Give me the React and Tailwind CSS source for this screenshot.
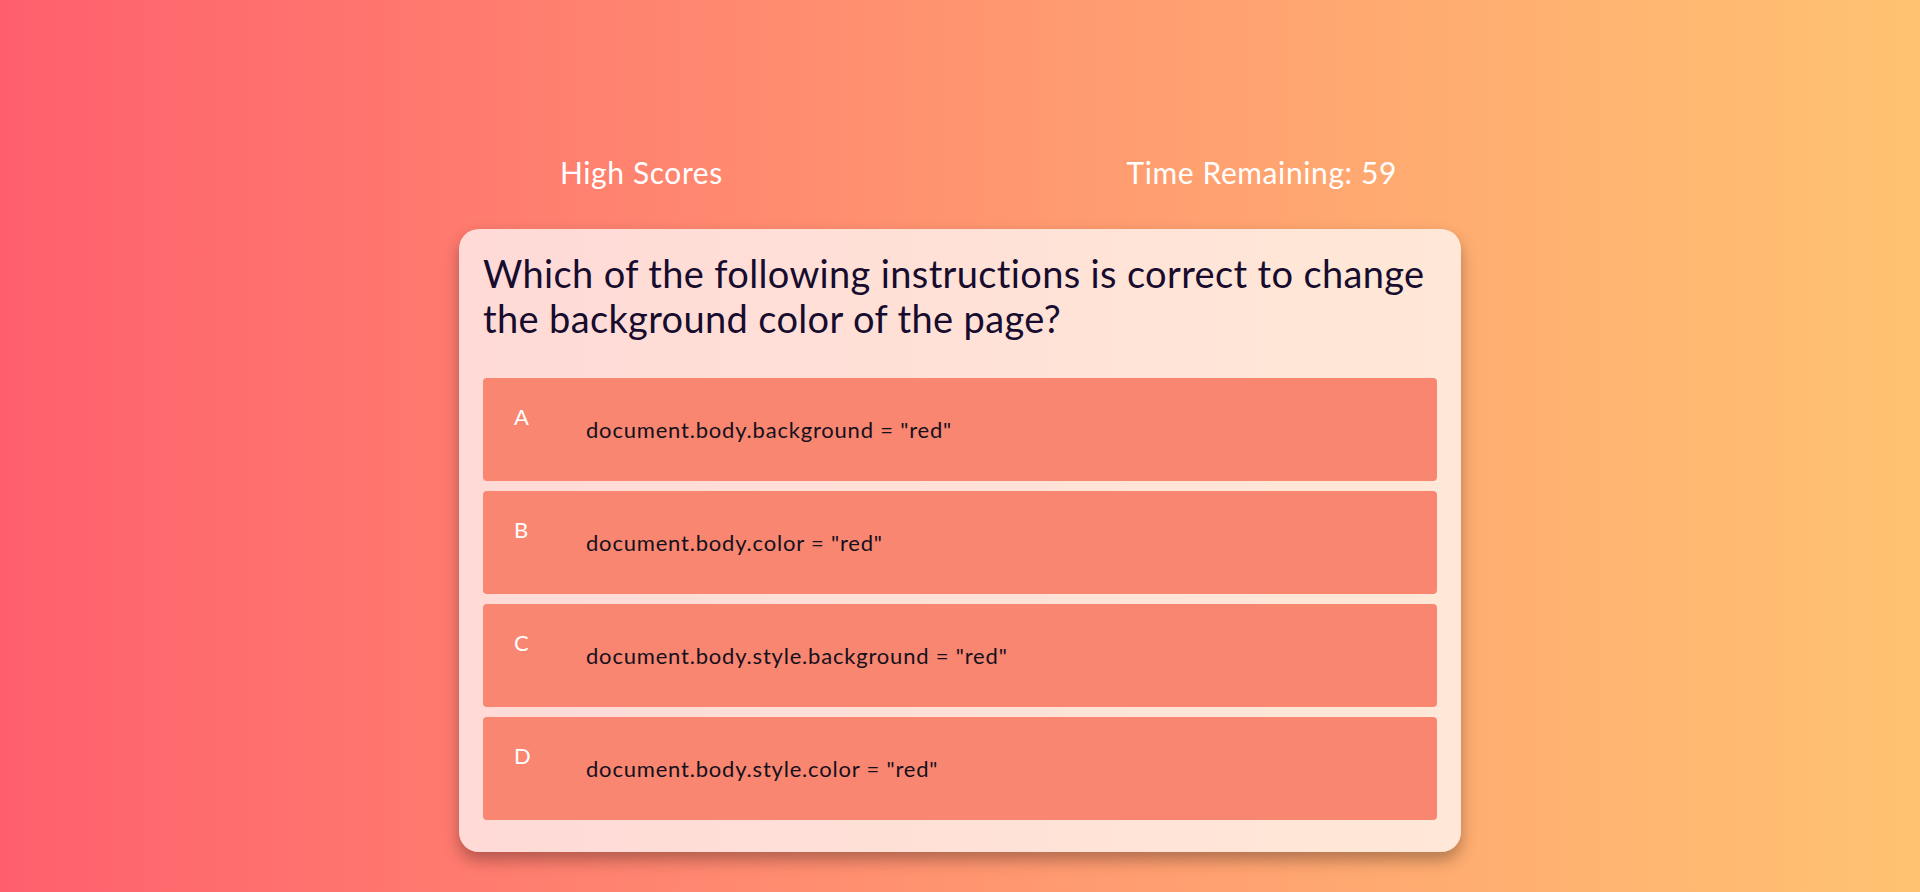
const OPTIONS = [
  { key: "A", text: 'document.body.background = "red"' },
  { key: "B", text: 'document.body.color = "red"' },
  { key: "C", text: 'document.body.style.background = "red"' },
  { key: "D", text: 'document.body.style.color = "red"' },
];

function Option({ letter, text }) {
  return (
    <button
      type="button"
      className="flex h-[103px] w-full items-center rounded-[4px] bg-[#f88670] pl-[31px] text-left"
    >
      <span className="w-[72px] shrink-0 self-start pt-[24px] text-[22px] leading-[30px] tracking-[0.5px] text-white">
        {letter}
      </span>
      <span className="text-[22px] leading-[30px] tracking-[0.8px] text-[#14101c]">{text}</span>
    </button>
  );
}

export default function App() {
  return (
    <div
      className="min-h-screen w-full bg-gradient-to-r from-[#ff5f6d] to-[#ffc371] pt-[154px] pb-[40px]"
      style={{ fontFamily: "Lato, 'Noto Sans', sans-serif" }}
    >
      <div className="mx-auto w-[1002px]">
        <header className="mb-[39px] flex h-[36px] items-center justify-between pl-[101px] pr-[64px] text-[30px] leading-[36px] tracking-[0.6px] text-white">
          <a href="#">High Scores</a>
          <div>
            Time Remaining: <span>59</span>
          </div>
        </header>

        <main className="rounded-[20px] bg-white/[0.72] px-[24px] pt-[22px] pb-[32px] shadow-[0_8px_16px_rgba(0,0,0,0.3)]">
          <h1 className="mb-[37px] text-[38px] leading-[45px] tracking-[0.35px] text-[#170c2e]">
            Which of the following instructions is correct to change the background
            color of the page?
          </h1>
          <div className="flex flex-col gap-[10px]">
            {OPTIONS.map((o) => (
              <Option key={o.key} letter={o.key} text={o.text} />
            ))}
          </div>
        </main>
      </div>
    </div>
  );
}
